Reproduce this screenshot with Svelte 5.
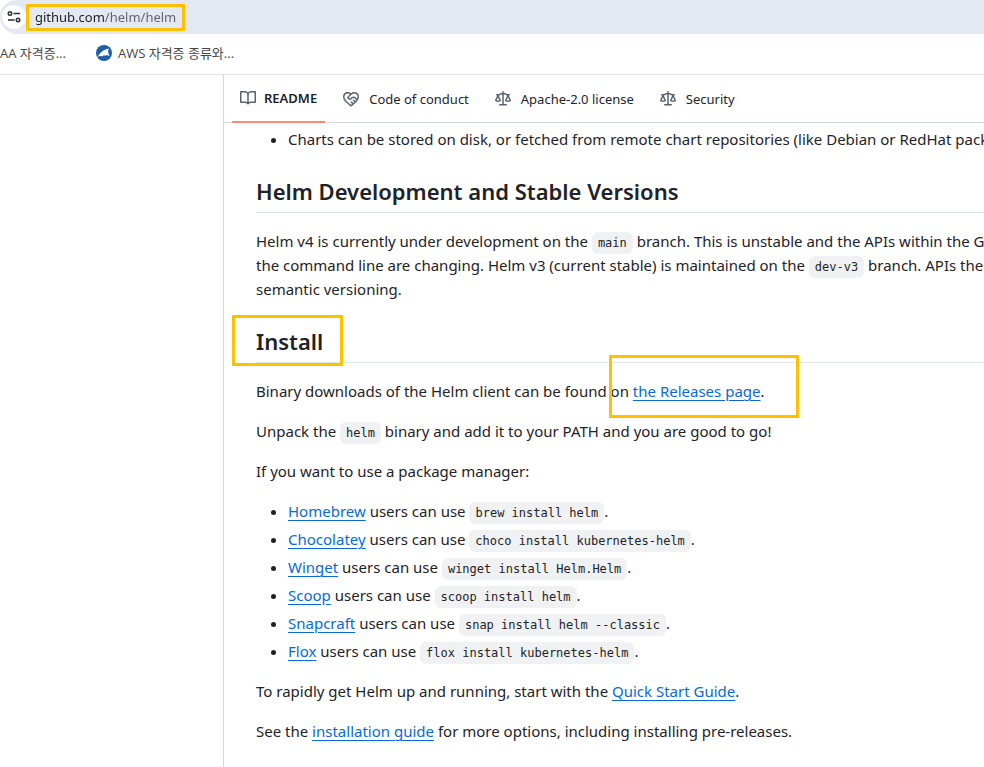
<script>
  const icons = {
    book: 'M0 1.75A.75.75 0 0 1 .75 1h4.253c1.227 0 2.317.59 3 1.501A3.743 3.743 0 0 1 11.006 1h4.245a.75.75 0 0 1 .75.75v10.5a.75.75 0 0 1-.75.75h-4.507a2.25 2.25 0 0 0-1.591.659l-.622.621a.75.75 0 0 1-1.06 0l-.622-.621A2.25 2.25 0 0 0 5.258 13H.75a.75.75 0 0 1-.75-.75Zm7.251 10.324.004-5.073-.002-2.253A2.25 2.25 0 0 0 5.003 2.5H1.5v9h3.757a3.75 3.75 0 0 1 1.994.574ZM8.755 4.75l-.004 7.322a3.752 3.752 0 0 1 1.992-.572H14.5v-9h-3.495a2.25 2.25 0 0 0-2.25 2.25Z',
    conduct: 'M8.048 2.241c.964-.709 2.079-1.238 3.325-1.241a4.616 4.616 0 0 1 3.282 1.355c.41.408.757.86.996 1.428.238.568.348 1.206.347 1.968 0 2.193-1.505 4.254-3.081 5.862-1.496 1.526-3.213 2.796-4.249 3.563l-.22.163a.749.749 0 0 1-.895 0l-.221-.163c-1.036-.767-2.753-2.037-4.249-3.563C1.51 10.008.007 7.952.002 5.762a4.614 4.614 0 0 1 1.353-3.407C3.123.585 6.223.537 8.048 2.24Zm-1.153.983c-1.25-1.033-3.321-.967-4.48.191a3.115 3.115 0 0 0-.913 2.335c0 1.556 1.109 3.24 2.652 4.813C5.463 11.898 6.96 13.032 8 13.805c.353-.262.758-.565 1.191-.905l-1.326-1.223a.75.75 0 0 1 1.018-1.102l1.48 1.366c.328-.281.659-.577.984-.887L9.99 9.802a.75.75 0 1 1 1.019-1.103l1.384 1.28c.295-.329.566-.661.81-.995L12.92 8.7l-1.167-1.168c-.674-.671-1.78-.664-2.474.03-.268.269-.538.537-.802.797-.893.882-2.319.843-3.185-.032-.346-.35-.693-.697-1.043-1.047a.75.75 0 0 1-.04-1.016c.162-.191.336-.401.52-.623.62-.748 1.356-1.637 2.166-2.417Zm7.112 4.442c.313-.65.491-1.293.491-1.916v-.001c0-.614-.088-1.045-.23-1.385-.143-.339-.357-.633-.673-.949a3.111 3.111 0 0 0-2.218-.915c-1.092.003-2.165.627-3.226 1.602-.823.755-1.554 1.637-2.228 2.45l-.127.154.562.566a.755.755 0 0 0 1.066.02l.794-.79c1.258-1.258 3.312-1.31 4.594-.032.396.394.792.791 1.173 1.173Z',
    law: 'M8.75.75V2h.985c.304 0 .603.08.867.231l1.29.736c.038.022.08.033.124.033h2.234a.75.75 0 0 1 0 1.5h-.427l2.111 4.692a.75.75 0 0 1-.154.838l-.53-.53.529.531-.001.002-.002.002-.006.006-.006.005-.01.01-.045.04c-.21.176-.441.327-.686.45C14.556 10.78 13.88 11 13 11a4.498 4.498 0 0 1-2.023-.454 3.544 3.544 0 0 1-.686-.45l-.045-.04-.016-.015-.006-.006-.004-.004v-.001a.75.75 0 0 1-.154-.838L12.178 4.5h-.162c-.305 0-.604-.079-.868-.231l-1.29-.736a.245.245 0 0 0-.124-.033H8.75V13h2.5a.75.75 0 0 1 0 1.5h-6.5a.75.75 0 0 1 0-1.5h2.5V3.5h-.984a.245.245 0 0 0-.124.033l-1.289.737c-.265.15-.564.23-.869.23h-.162l2.112 4.692a.75.75 0 0 1-.154.838l-.53-.53.529.531-.001.002-.002.002-.006.006-.016.015-.045.04c-.21.176-.441.327-.686.45C4.556 10.78 3.88 11 3 11a4.498 4.498 0 0 1-2.023-.454 3.544 3.544 0 0 1-.686-.45l-.045-.04-.016-.015-.006-.006-.004-.004v-.001a.75.75 0 0 1-.154-.838L2.178 4.5H1.75a.75.75 0 0 1 0-1.5h2.234a.249.249 0 0 0 .125-.033l1.288-.737c.265-.15.564-.23.869-.23h.984V.75a.75.75 0 0 1 1.5 0Zm2.945 8.477c.285.135.718.273 1.305.273s1.02-.138 1.305-.273L13 6.327Zm-10 0c.285.135.718.273 1.305.273s1.02-.138 1.305-.273L3 6.327Z'
  };

  const tabs = [
    { label: 'README', icon: icons.book, active: true },
    { label: 'Code of conduct', icon: icons.conduct },
    { label: 'Apache-2.0 license', icon: icons.law },
    { label: 'Security', icon: icons.law }
  ];

  const managers = [
    { name: 'Homebrew', command: 'brew install helm' },
    { name: 'Chocolatey', command: 'choco install kubernetes-helm' },
    { name: 'Winget', command: 'winget install Helm.Helm' },
    { name: 'Scoop', command: 'scoop install helm' },
    { name: 'Snapcraft', command: 'snap install helm --classic' },
    { name: 'Flox', command: 'flox install kubernetes-helm' }
  ];

  let url = $state('github.com/helm/helm');
</script>

<div class="page">
  <header class="toolbar">
    <button class="site-info" aria-label="View site information">
      <svg width="14" height="14" viewBox="0 0 14 14" fill="none" stroke="#303134" stroke-width="1.6" aria-hidden="true">
        <circle cx="3" cy="3.5" r="1.7" /><path d="M6.5 3.5H13M1 10h6.5" /><circle cx="11" cy="10" r="1.7" />
      </svg>
    </button>
    <input class="address" aria-label="Address and search bar" bind:value={url} />
  </header>

  <nav class="bookmarks" aria-label="Bookmarks">
    <a href="#aa">AA 자격증...</a>
    <a href="#aws">
      <svg width="16" height="16" viewBox="0 0 16 16" aria-hidden="true">
        <circle cx="8" cy="8" r="8" fill="#1f5fa8" />
        <path d="M1.500 12C4 8 7 4.500 13 3.500C11.500 5.500 12 8 13.500 11L12 10.500C11 9.500 10 10 9.500 11C8.500 10 7.500 10 6.500 11.500C5 10.800 3 11 1.500 12Z" fill="#fff" />
      </svg>
      AWS 자격증 종류와...
    </a>
  </nav>

  <main class="readme">
    <nav class="tabs" aria-label="Repository files">
      {#each tabs as tab}
        <a href="#tab" class="tab" class:active={tab.active}>
          <svg width="16" height="16" viewBox="0 0 16 16" fill="#59636e" aria-hidden="true"><path d={tab.icon} /></svg>
          {tab.label}
        </a>
      {/each}
    </nav>

    <article>
      <ul>
        <li>Charts can be stored on disk, or fetched from remote chart repositories (like Debian or RedHat pack</li>
      </ul>

      <h2>Helm Development and Stable Versions</h2>
      <p>
        Helm v4 is currently under development on the <code>main</code> branch. This is unstable and the APIs within the G<br />
        the command line are changing. Helm v3 (current stable) is maintained on the <code>dev-v3</code> branch. APIs the<br />
        semantic versioning.
      </p>

      <h2><span class="marked-title">Install</span></h2>
      <p>
        Binary downloads of the Helm client can be found <span class="marked-link">on <a href="#releases">the Releases page</a>.</span>
      </p>
      <p>Unpack the <code>helm</code> binary and add it to your PATH and you are good to go!</p>
      <p>If you want to use a package manager:</p>
      <ul>
        {#each managers as m}
          <li><a href="#{m.name}">{m.name}</a> users can use <code>{m.command}</code>.</li>
        {/each}
      </ul>
      <p>To rapidly get Helm up and running, start with the <a href="#quickstart">Quick Start Guide</a>.</p>
      <p>See the <a href="#guide">installation guide</a> for more options, including installing pre-releases.</p>
    </article>
  </main>
</div>

<style>
  .page {
    display: flex;
    flex-direction: column;
    min-height: 100vh;
    overflow: hidden;
    background: #fff;
    color: #1f2328;
    font-family: 'Noto Sans', 'Noto Sans CJK KR', sans-serif;
    font-size: 15px;
    line-height: 24px;
  }
  .page * {
    box-sizing: border-box;
  }
  .toolbar {
    display: flex;
    align-items: center;
    height: 34px;
    background: #e4e8f2;
    border-radius: 17px 0 0 17px;
  }
  .site-info {
    display: grid;
    place-items: center;
    width: 24px;
    height: 24px;
    margin: 0 0 0 2px;
    padding: 0;
    border: 0;
    border-radius: 50%;
    background: #fff;
  }
  .address {
    width: 159px;
    height: 27px;
    padding: 0 0 0 6px;
    border: 3px solid #ffc000;
    outline: 0;
    font: 13px/20px 'Noto Sans', sans-serif;
    color: transparent;
    background: linear-gradient(90deg, #1f1f1f 76px, #5f6368 76px);
    background-clip: text;
    caret-color: #1f1f1f;
  }
  .bookmarks {
    display: flex;
    align-items: center;
    gap: 30px;
    height: 41px;
    padding-bottom: 2px;
    border-bottom: 1px solid #dfe1e5;
    font: 13px/20px 'Open Sans', 'Noto Sans CJK KR', sans-serif;
  }
  .bookmarks a {
    display: flex;
    align-items: center;
    gap: 6px;
    color: #474747;
    text-decoration: none;
    white-space: nowrap;
  }
  .readme {
    flex: 1;
    margin-left: 223px;
    border-left: 1px solid #d1d9e0;
    white-space: nowrap;
  }
  .tabs {
    display: flex;
    gap: 10px;
    height: 48px;
    padding-left: 8px;
    border-bottom: 1px solid #d1d9e0;
    font-size: 13px;
  }
  .tab {
    display: flex;
    align-items: center;
    gap: 10px;
    height: 48px;
    padding: 0 8px;
    color: #1f2328;
    text-decoration: none;
  }
  .tab.active {
    gap: 8px;
    font-weight: 600;
    border-bottom: 2px solid #fd8c73;
  }
  article {
    padding: 4px 0 0 32px;
  }
  ul {
    margin: 0 0 16px;
    padding-left: 32px;
  }
  li + li {
    margin-top: 4px;
  }
  h2 {
    margin: 24px 0 16px;
    padding-bottom: 5px;
    border-bottom: 1px solid #d1d9e0b3;
    font-size: 22px;
    font-weight: 600;
    line-height: 32px;
  }
  p {
    margin: 0 0 16px;
  }
  p a,
  li a {
    color: #0969da;
    text-underline-offset: 3px;
  }
  code {
    padding: 4px 6px;
    border-radius: 6px;
    background: #eff1f3;
    font: 12px/16px 'DejaVu Sans Mono', monospace;
  }
  .marked-title,
  .marked-link {
    position: relative;
  }
  .marked-title::after,
  .marked-link::after {
    content: '';
    position: absolute;
    border: 3px solid #ffc000;
  }
  .marked-title::after {
    inset: -11px -20px -10px -24px;
  }
  .marked-link::after {
    inset: -26px -34px -17px -2px;
  }
</style>
